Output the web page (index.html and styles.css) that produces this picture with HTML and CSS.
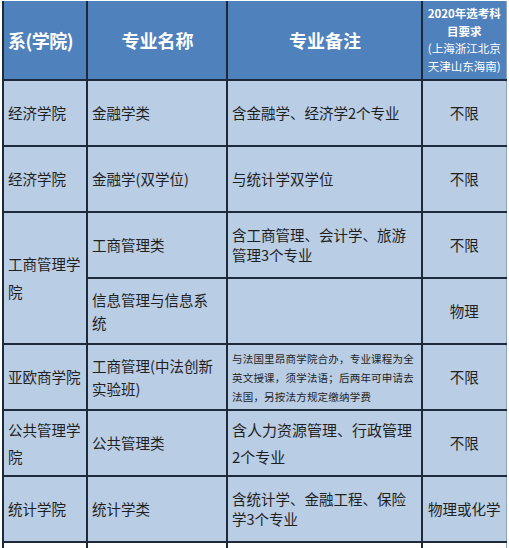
FILE: index.html
```html
<!DOCTYPE html>
<html lang="zh-CN">
<head>
<meta charset="utf-8">
<link rel="stylesheet" href="styles.css">
</head>
<body>
<table class="tbl">
  <colgroup>
    <col class="c1"><col class="c2"><col class="c3"><col class="c4">
  </colgroup>
  <thead>
    <tr class="head">
      <th class="h-left">系(学院)</th>
      <th>专业名称</th>
      <th>专业备注</th>
      <th class="h-small"><b>2020年选考科目要求</b><span>(上海浙江北京天津山东海南)</span></th>
    </tr>
  </thead>
  <tbody>
    <tr>
      <td>经济学院</td>
      <td class="name">金融学类</td>
      <td>含金融学、经济学2个专业</td>
      <td class="req">不限</td>
    </tr>
    <tr>
      <td>经济学院</td>
      <td class="name">金融学(双学位)</td>
      <td>与统计学双学位</td>
      <td class="req">不限</td>
    </tr>
    <tr>
      <td rowspan="2" class="tall">工商管理学院</td>
      <td class="name">工商管理类</td>
      <td class="two">含工商管理、会计学、旅游管理3个专业</td>
      <td class="req">不限</td>
    </tr>
    <tr>
      <td class="name two2">信息管理与信息系统</td>
      <td></td>
      <td class="req">物理</td>
    </tr>
    <tr>
      <td>亚欧商学院</td>
      <td class="name two2">工商管理(中法创新实验班)</td>
      <td class="small">与法国里昂商学院合办，专业课程为全英文授课，须学法语；后两年可申请去法国，另按法方规定缴纳学费</td>
      <td class="req">不限</td>
    </tr>
    <tr>
      <td class="two3">公共管理学院</td>
      <td class="name">公共管理类</td>
      <td class="two big">含人力资源管理、行政管理2个专业</td>
      <td class="req">不限</td>
    </tr>
    <tr>
      <td>统计学院</td>
      <td class="name">统计学类</td>
      <td class="two">含统计学、金融工程、保险学3个专业</td>
      <td class="req">物理或化学</td>
    </tr>
    <tr class="tail">
      <td></td><td></td><td></td><td></td>
    </tr>
  </tbody>
</table>
</body>
</html>
```

FILE: styles.css
```css
html, body {
  margin: 0;
  padding: 0;
  background: #ffffff;
  overflow: hidden;
}
body {
  padding: 1px 0 0 2px;
  font-family: "Noto Sans CJK SC", "Noto Sans", sans-serif;
  color: #1f1f1f;
}
.tbl {
  border-collapse: collapse;
  table-layout: fixed;
  width: 503px;
}
.c1 { width: 84px; }
.c2 { width: 140px; }
.c3 { width: 195px; }
.c4 { width: 84px; }

.tbl th, .tbl td {
  border: 2px solid #1d2a3c;
  padding: 0 3px 0 4px;
  vertical-align: middle;
  text-align: left;
  overflow: hidden;
}
.tbl tr > :last-child {
  border-right: 1px solid #8fa3bd;
}
.head th {
  background: #4f81bd;
  color: #ffffff;
  font-weight: bold;
  font-size: 18px;
  height: 78px;
  text-align: center;
  border-top: none;
}
.head th.h-left {
  text-align: left;
  padding-left: 4px;
  letter-spacing: -0.5px;
}
.head th.h-small {
  font-size: 11.5px;
  line-height: 17.5px;
  padding: 0 2px;
  font-weight: normal;
}
.h-small b {
  font-weight: bold;
  display: block;
}
.h-small span {
  display: block;
}
.tbl td {
  background: #b9cde5;
  font-size: 14.5px;
  height: 64px;
  line-height: 20px;
}
.tbl td.name {
  padding-right: 10px;
}
.tbl td.req {
  text-align: center;
  padding: 0 2px;
}
.tbl td.tall {
  line-height: 28px;
}
.tbl td.two2 {
  line-height: 23px;
}
.tbl td.two3 {
  line-height: 27px;
}
.tbl td.big {
  font-size: 15px;
  line-height: 27px;
}
.tbl td.small {
  font-size: 10.5px;
  line-height: 19px;
  padding-right: 2px;
  letter-spacing: 0.2px;
}
.tail td {
  background: #ffffff;
  height: 20px;
  border-bottom: none;
}
```
